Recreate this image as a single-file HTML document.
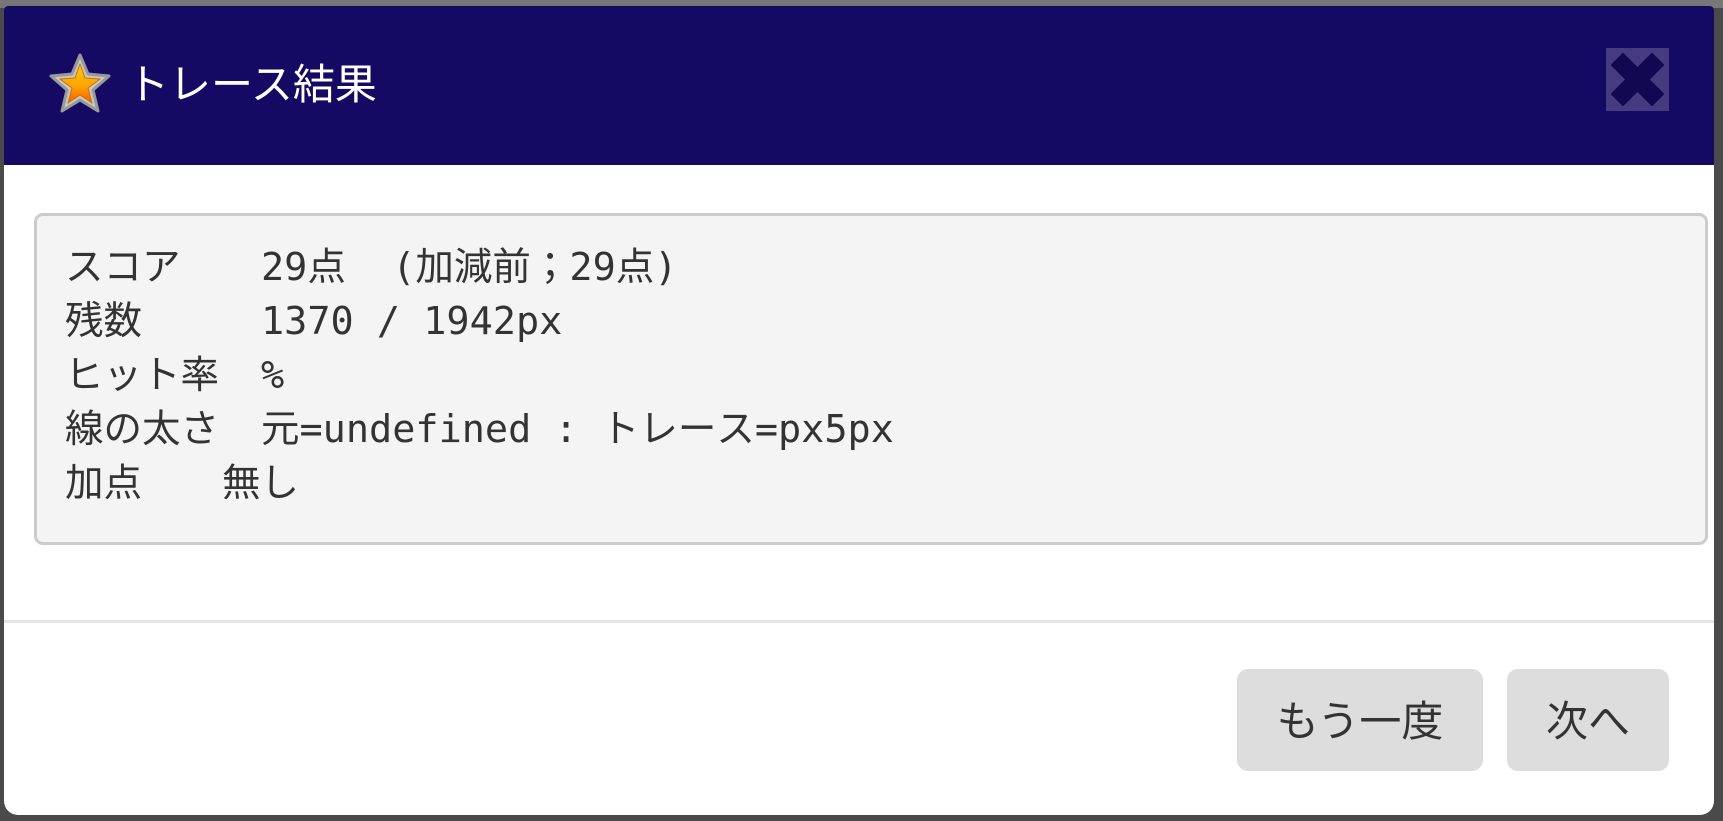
<!DOCTYPE html>
<html><head><meta charset="utf-8"><style>
html,body{margin:0;padding:0;width:1723px;height:821px;overflow:hidden;background:#4a4a4a;}
body{position:relative;font-family:"Liberation Sans","Noto Sans CJK JP",sans-serif;}
.topbar{position:absolute;left:0;top:0;width:1723px;height:8px;background:#777;}
.dlg{position:absolute;left:4px;top:6px;width:1710px;height:809px;background:#fff;border-radius:4px 4px 14px 14px;overflow:hidden;}
.hdr{position:absolute;left:0;top:0;width:100%;height:159px;background:#140a64;}
.title{position:absolute;left:123px;top:45px;color:#fff;font-size:42px;line-height:62px;font-family:"Noto Sans CJK JP",sans-serif;}
.star{position:absolute;left:43px;top:45px;}
.close{position:absolute;left:1602px;top:42px;width:63px;height:63px;background:#463a80;}
.box{position:absolute;left:30px;top:207px;width:1674px;height:332px;box-sizing:border-box;background:#f4f4f4;border:3px solid #ccc;border-radius:9px;}
.line{position:absolute;left:28px;font-family:"DejaVu Sans Mono","Noto Sans Mono CJK JP","Noto Sans CJK JP",monospace;font-size:38.5px;color:#333;white-space:pre;line-height:44px;}
.v{position:absolute;top:0;}
.div{position:absolute;left:0;top:614px;width:100%;height:3px;background:#e5e5e5;}
.btn{position:absolute;top:663px;height:102px;background:#ddd;border-radius:11px;color:#333;font-size:42px;font-family:"Noto Sans CJK JP",sans-serif;text-align:center;line-height:100px;}
</style></head><body>
<div class="topbar"></div>
<div class="dlg">
 <div class="hdr">
  <svg class="star" width="66" height="66" viewBox="0 0 66 66">
   <defs><linearGradient id="g" x1="0" y1="0" x2="0" y2="1"><stop offset="0" stop-color="#ffd000"/><stop offset="0.6" stop-color="#ffa000"/><stop offset="1" stop-color="#ff5a00"/></linearGradient></defs>
   <polygon points="33,4 41,23 62,25 46,39 51,60 33,49 15,60 20,39 4,25 25,23" fill="#c8c8c8" stroke="#999" stroke-width="3" stroke-linejoin="round"/>
   <polygon points="33,13 38,27 53,28 41,37 45,52 33,44 21,52 25,37 13,28 28,27" fill="url(#g)" stroke="#c87000" stroke-width="1" stroke-linejoin="round"/>
  </svg>
  <div class="title">トレース結果</div>
  <div class="close"><svg width="63" height="63" viewBox="0 0 63 63"><path d="M17 6 L31.5 20.5 L46 6 L57 17 L42.5 31.5 L57 46 L46 57 L31.5 42.5 L17 57 L6 46 L20.5 31.5 L6 17 Z" fill="#120852" stroke="#120852" stroke-width="2" stroke-linejoin="round"/></svg></div>
 </div>
 <div class="box">
  <div class="line" style="top:30px">スコア<span class="v" style="left:196px">29点  (加減前；29点)</span></div>
  <div class="line" style="top:84px">残数<span class="v" style="left:196px">1370 / 1942px</span></div>
  <div class="line" style="top:138px">ヒット率<span class="v" style="left:196px">%</span></div>
  <div class="line" style="top:192px">線の太さ<span class="v" style="left:196px">元=undefined : トレース=px5px</span></div>
  <div class="line" style="top:246px">加点<span class="v" style="left:157px">無し</span></div>
 </div>
 <div class="div"></div>
 <div class="btn" style="left:1233px;width:246px;">もう一度</div>
 <div class="btn" style="left:1503px;width:162px;">次へ</div>
</div>
</body></html>
